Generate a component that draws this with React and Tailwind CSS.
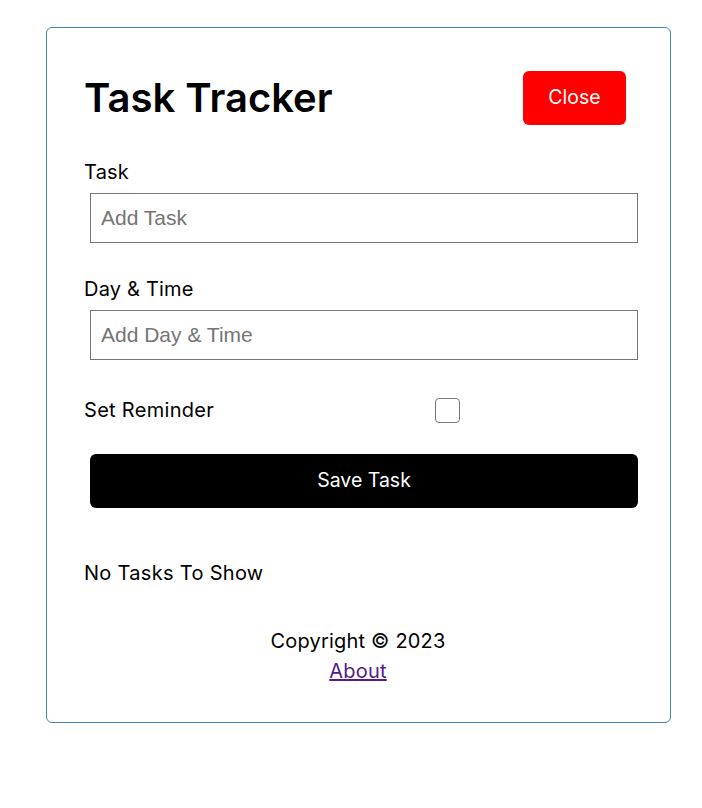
import { useState } from 'react';

export default function App() {
  const [text, setText] = useState('');
  const [day, setDay] = useState('');
  const [reminder, setReminder] = useState(false);

  return (
    <div className="min-h-screen bg-white pt-[27px] pb-[80px] font-['Inter','Open_Sans',sans-serif] text-black">
      <div className="ml-[46px] w-[625px] border border-[#4682b4] rounded-[6px] pl-[37px] pr-[38px] pt-[37px] pb-[36px] flex flex-col">
        <header className="flex items-center justify-between">
          <h1 className="text-[40px] font-semibold leading-[60px]">Task Tracker</h1>
          <button className="m-[6px] w-[103px] h-[54px] bg-[#ff0000] text-white rounded-[6px] text-[19.5px]">
            Close
          </button>
        </header>

        <form className="mt-[26px] flex flex-col" onSubmit={(e) => e.preventDefault()}>
          <label className="text-[20px] leading-[30px] tracking-[0.2px]">Task</label>
          <input
            type="text"
            placeholder="Add Task"
            value={text}
            onChange={(e) => setText(e.target.value)}
            className="mt-[6px] ml-[6px] w-[548px] h-[50px] border border-[#767676] pl-[10px] pr-[9px] font-['Liberation_Sans',Arial,sans-serif] text-[21px] placeholder:text-[#757575] outline-none"
          />
          <label className="mt-[31px] text-[20px] leading-[30px] tracking-[0.2px]">Day &amp; Time</label>
          <input
            type="text"
            placeholder="Add Day & Time"
            value={day}
            onChange={(e) => setDay(e.target.value)}
            className="mt-[6px] ml-[6px] w-[548px] h-[50px] border border-[#767676] pl-[10px] pr-[9px] font-['Liberation_Sans',Arial,sans-serif] text-[21px] placeholder:text-[#757575] outline-none"
          />
          <div className="mt-[32px] flex items-center h-[36px]">
            <label className="w-[183px] text-[20px] leading-[30px] tracking-[0.3px]">Set Reminder</label>
            <div className="w-[360px] flex justify-center">
              <input
                type="checkbox"
                checked={reminder}
                onChange={(e) => setReminder(e.target.checked)}
                className="appearance-none w-[25px] h-[25px] border border-[#767676] rounded-[4px] bg-white checked:bg-[#0075ff]"
              />
            </div>
          </div>
          <button
            type="submit"
            className="mt-[26px] ml-[6px] w-[548px] h-[54px] bg-black text-white rounded-[6px] text-[19.5px]"
          >
            Save Task
          </button>
        </form>

        <p className="mt-[50px] text-[20px] leading-[30px] tracking-[0.3px]">No Tasks To Show</p>

        <footer className="mt-[38px] text-center text-[20px] leading-[30px] tracking-[0.2px]">
          <p>Copyright © 2023</p>
          <a href="#" className="text-[#551a8b] underline">About</a>
        </footer>
      </div>
    </div>
  );
}
